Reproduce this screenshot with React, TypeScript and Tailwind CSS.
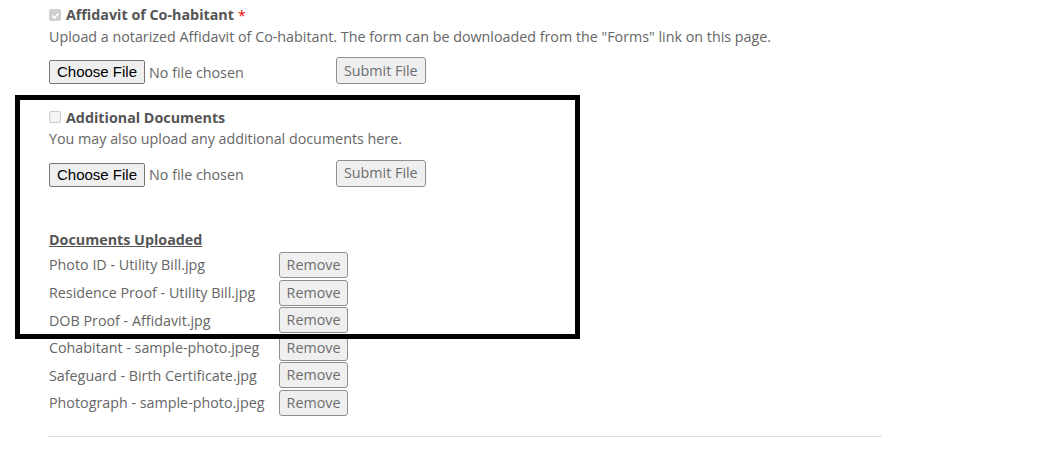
import React from 'react';

const docs = [
    'Photo ID - Utility Bill.jpg',
    'Residence Proof - Utility Bill.jpg',
    'DOB Proof - Affidavit.jpg',
    'Cohabitant - sample-photo.jpeg',
    'Safeguard - Birth Certificate.jpg',
    'Photograph - sample-photo.jpeg',
];

const btn = "border border-[#8f8f8f] rounded-[3px] bg-[#efefef] text-[#6d6d6d] text-[14.3px] leading-none";

function UploadRow() {
    return (
        <div className="flex flex-row items-end mt-[10px]">
            <div className="flex flex-row items-center w-[287px]">
                <span className="border border-[#767676] rounded-[2px] bg-[#efefef] text-black px-[7px] h-[24px] flex items-center text-[15px] font-['Liberation_Sans',sans-serif]">Choose File</span>
                <span className="ml-[4px] text-[14.3px] text-[#666]">No file chosen</span>
            </div>
            <span className={btn + " px-[7px] h-[27px] flex items-center"}>Submit File</span>
        </div>
    );
}

function Section({ title, desc, checked, required }: { title: string; desc: string; checked?: boolean; required?: boolean }) {
    return (
        <div>
            <div className="flex flex-row items-center h-[20px]">
                <span className={"w-[12px] h-[12px] rounded-[2px] border mr-[5px] flex items-center justify-center " + (checked ? "bg-[#cfcfcf] border-[#cfcfcf]" : "bg-[#f3f3f3] border-[#cacaca]")}>
                    {checked && (
                        <svg width="9" height="9" viewBox="0 0 10 10"><path d="M1.5 5.2 L4 7.5 L8.5 2.5" stroke="#fff" strokeWidth="1.8" fill="none" /></svg>
                    )}
                </span>
                <span className="font-bold text-[14.3px] text-[#555]">{title}</span>
                {required && <span className="text-[#e00] ml-[4px] text-[14px]">*</span>}
            </div>
            <div className="text-[14.3px] text-[#666] mt-[1px]">{desc}</div>
            <UploadRow />
        </div>
    );
}

export default function App() {
    return (
        <div className="relative w-[1043px] h-[451px] bg-white overflow-hidden font-['Open_Sans',sans-serif] text-[#666]">
            <div className="pl-[49px] pt-[5px] w-[882px]">
                <Section title="Affidavit of Co-habitant" desc={'Upload a notarized Affidavit of Co-habitant. The form can be downloaded from the "Forms" link on this page.'} checked required />
                <div className="mt-[23px]">
                    <Section title="Additional Documents" desc="You may also upload any additional documents here." />
                </div>
                <div className="mt-[42px] font-bold underline text-[14.3px] text-[#555]">Documents Uploaded</div>
                <div className="flex flex-col mt-[1px]">
                    {docs.map((d) => (
                        <div key={d} className="flex flex-row items-center h-[27.6px]">
                            <span className="w-[230px] text-[14.3px] text-[#666]">{d}</span>
                            <span className={btn + " w-[69px] h-[26px] flex items-center justify-center"}>Remove</span>
                        </div>
                    ))}
                </div>
                <div className="mt-[19px] border-t border-[#ddd] -ml-[1px]"></div>
            </div>
            <div className="absolute left-[15px] top-[95px] w-[565px] h-[244px] border-[5px] border-black"></div>
        </div>
    );
}
